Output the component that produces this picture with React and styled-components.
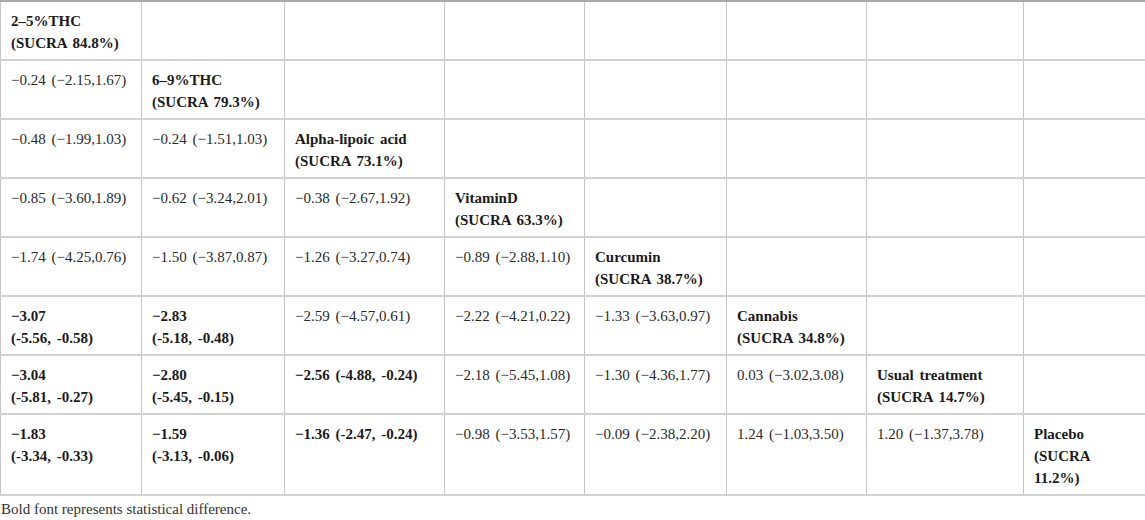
import styled, { createGlobalStyle } from "styled-components";

const GlobalStyle = createGlobalStyle`
  body {
    margin: 0;
    background: #fff;
    font-family: "Liberation Serif", "Times New Roman", serif;
    color: #222;
  }
`;

const widths = [141, 143, 160, 140, 142, 140, 157, 122];

// each row: cells left of the diagonal are comparisons, the diagonal is the treatment
const rows = [
  [{ b: true, t: ["2–5%THC", "(SUCRA 84.8%)"] }],
  ["−0.24 (−2.15,1.67)", { b: true, t: ["6–9%THC", "(SUCRA 79.3%)"] }],
  [
    "−0.48 (−1.99,1.03)",
    "−0.24 (−1.51,1.03)",
    { b: true, t: ["Alpha-lipoic acid", "(SUCRA 73.1%)"] },
  ],
  [
    "−0.85 (−3.60,1.89)",
    "−0.62 (−3.24,2.01)",
    "−0.38 (−2.67,1.92)",
    { b: true, t: ["VitaminD", "(SUCRA 63.3%)"] },
  ],
  [
    "−1.74 (−4.25,0.76)",
    "−1.50 (−3.87,0.87)",
    "−1.26 (−3.27,0.74)",
    "−0.89 (−2.88,1.10)",
    { b: true, t: ["Curcumin", "(SUCRA 38.7%)"] },
  ],
  [
    { b: true, t: ["−3.07", "(-5.56, -0.58)"] },
    { b: true, t: ["−2.83", "(-5.18, -0.48)"] },
    "−2.59 (−4.57,0.61)",
    "−2.22 (−4.21,0.22)",
    "−1.33 (−3.63,0.97)",
    { b: true, t: ["Cannabis", "(SUCRA 34.8%)"] },
  ],
  [
    { b: true, t: ["−3.04", "(-5.81, -0.27)"] },
    { b: true, t: ["−2.80", "(-5.45, -0.15)"] },
    { b: true, t: ["−2.56 (-4.88, -0.24)"] },
    "−2.18 (−5.45,1.08)",
    "−1.30 (−4.36,1.77)",
    "0.03 (−3.02,3.08)",
    { b: true, t: ["Usual treatment", "(SUCRA 14.7%)"] },
  ],
  [
    { b: true, t: ["−1.83", "(-3.34, -0.33)"] },
    { b: true, t: ["−1.59", "(-3.13, -0.06)"] },
    { b: true, t: ["−1.36 (-2.47, -0.24)"] },
    "−0.98 (−3.53,1.57)",
    "−0.09 (−2.38,2.20)",
    "1.24 (−1.03,3.50)",
    "1.20 (−1.37,3.78)",
    { b: true, t: ["Placebo", "(SUCRA", "11.2%)"] },
  ],
];

const Table = styled.table`
  width: 1145px;
  table-layout: fixed;
  border-collapse: collapse;
  border-top: 2px solid #aaa;
  border-left: 1px solid #c6c6c6;
  border-right: 1px solid #c6c6c6;
`;

const Row = styled.tr`
  border-bottom: 2px solid #d2d2d2;
`;

const Cell = styled.td`
  vertical-align: top;
  padding: 8px 10px 5px;
  border-left: 1px solid #c6c6c6;
  font-size: 15px;
  line-height: 22px;
  font-weight: ${(p) => (p.$bold ? 700 : 400)};
  color: ${(p) => (p.$bold ? "#1b1b1b" : "#2a2a2a")};
  white-space: nowrap;
  word-spacing: 2px;
  &:first-child {
    border-left: none;
  }
`;

const Line = styled.div``;

const Footnote = styled.p`
  margin: 0;
  padding: 3px 0 0 1px;
  font-size: 15px;
  line-height: 20px;
  color: #333;
`;

export default function App() {
  return (
    <>
      <GlobalStyle />
      <Table>
        <colgroup>
          {widths.map((w, i) => (
            <col key={i} style={{ width: w }} />
          ))}
        </colgroup>
        <tbody>
          {rows.map((row, r) => (
            <Row key={r}>
              {widths.map((_, c) => {
                const v = row[c];
                if (v === undefined) return <Cell key={c} />;
                if (typeof v === "string") return <Cell key={c}>{v}</Cell>;
                return (
                  <Cell key={c} $bold={v.b}>
                    {v.t.map((line, i) => (
                      <Line key={i}>{line}</Line>
                    ))}
                  </Cell>
                );
              })}
            </Row>
          ))}
        </tbody>
      </Table>
      <Footnote>Bold font represents statistical difference.</Footnote>
    </>
  );
}
